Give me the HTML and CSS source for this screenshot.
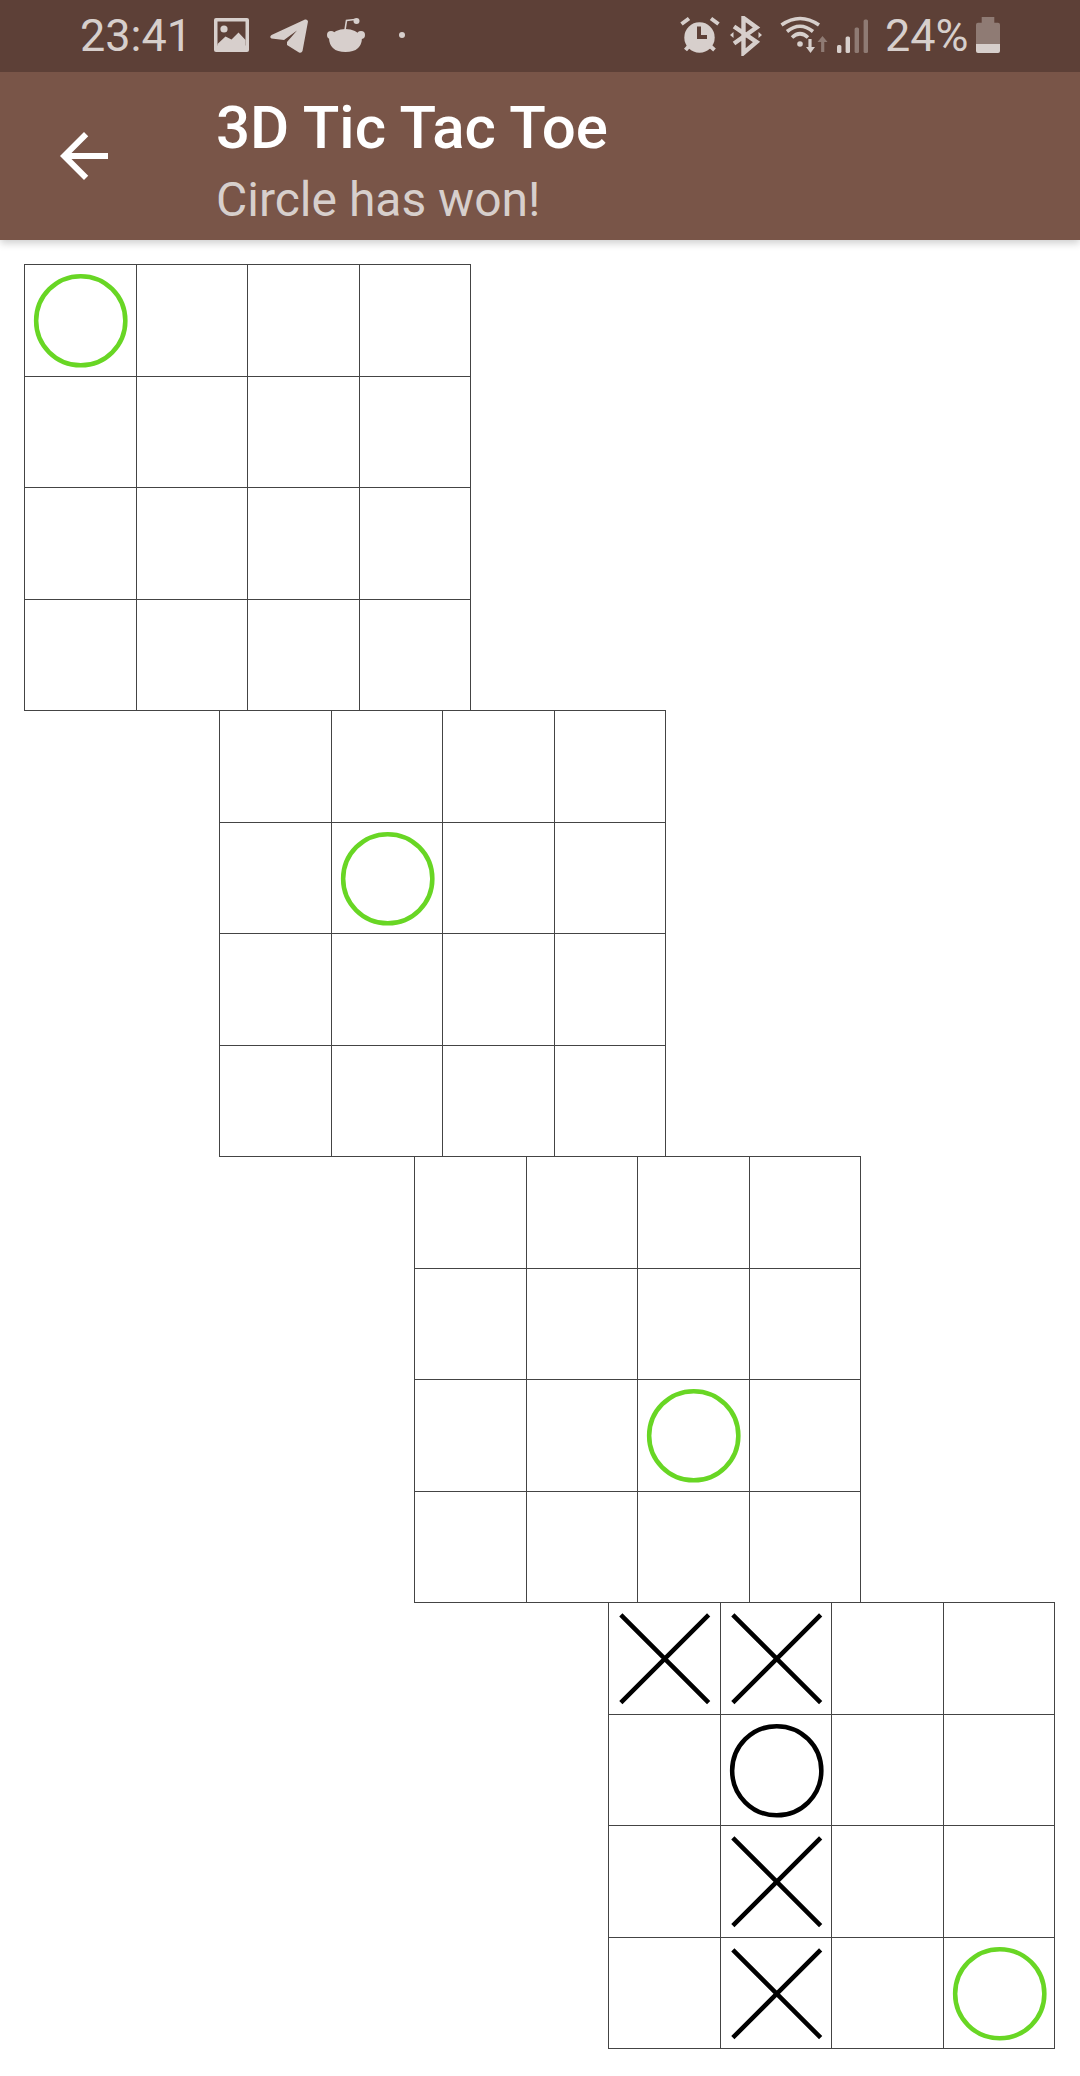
FILE: index.html
```html
<!DOCTYPE html>
<html lang="en">
<head>
  <meta charset="UTF-8">
  <meta name="viewport" content="width=device-width, initial-scale=1.0">
  <title>3D Tic Tac Toe</title>
  <link rel="stylesheet" href="styles.css">
</head>
<body>
  <svg class="defs" width="0" height="0">
    <defs>
      <g id="nought"><circle cx="56.5" cy="56.5" r="45.2"/></g>
      <g id="cross"><path d="M12 12L101 101M101 12L12 101"/></g>
    </defs>
  </svg>

  <header class="app-header">
    <div class="status-bar">
      <div class="status-left">
        <span class="status-text time">23:41</span>
        <svg class="icon icon-image" viewBox="0 0 36 40">
          <rect x="0" y="2" width="35" height="34" rx="2" fill="#d7cfcc"/>
          <rect x="3.5" y="5.5" width="28" height="24" fill="#5d4037"/>
          <circle cx="10" cy="13" r="3.6" fill="#d7cfcc"/>
          <path d="M3.5 28L11.5 20.5L17.5 23.5L24.5 16.5L31.5 24V31H3.5Z" fill="#d7cfcc"/>
        </svg>
        <svg class="icon icon-telegram" viewBox="0 0 40 40">
          <path d="M36 3.5L2.5 19Q0 21 2.5 22.5L15 24L28 14.5L18 26L18 29L30 36.5Q32.5 37.5 33.5 35L39 5.5Q38.5 3 36 3.5Z" fill="#d7cfcc"/>
        </svg>
        <svg class="icon icon-reddit" viewBox="0 0 38 40">
          <circle cx="4" cy="19" r="4" fill="#d7cfcc"/>
          <circle cx="34" cy="19" r="4" fill="#d7cfcc"/>
          <path d="M2 21Q8 13 18.5 13Q29 13 35 21Q35 36 18.5 36Q2 36 2 21Z" fill="#d7cfcc"/>
          <path d="M18 14L19.5 4.5L28 3.5" fill="none" stroke="#d7cfcc" stroke-width="1.6"/>
          <circle cx="29.5" cy="5" r="3" fill="#d7cfcc"/>
        </svg>
        <span class="status-dot"></span>
      </div>
      <div class="status-right">
        <svg class="icon icon-alarm" viewBox="0 0 40 40">
          <circle cx="19.5" cy="21.5" r="15.2" fill="#d7cfcc"/>
          <path d="M17 10.5H21V19H27V23H17Z" fill="#5d4037"/>
          <path d="M1.5 8L9 2.5M31 2.5L38.5 8M5.5 34L9 30M34.5 34L30 30" fill="none" stroke="#d7cfcc" stroke-width="4"/>
        </svg>
        <svg class="icon icon-bluetooth" viewBox="0 0 34 40">
          <path d="M5 27.5L27.5 11.5L14.5 2V37L27.5 26L5 10.5" fill="none" stroke="#d7cfcc" stroke-width="4.4"/>
          <path d="M1 19L4.5 16V22ZM33 19L29.5 16V22Z" fill="#d7cfcc"/>
        </svg>
        <svg class="icon icon-wifi" viewBox="0 0 48 40">
          <g fill="none" stroke="#d7cfcc" stroke-width="3.6">
            <path d="M1.5 9Q20 -4 39 9"/>
            <path d="M7 15.5Q20 5 33 15.5"/>
            <path d="M12 21.5Q20 14 28 21.5"/>
          </g>
          <circle cx="20" cy="28" r="2.8" fill="#d7cfcc"/>
          <path d="M30 23V32" stroke="#d7cfcc" stroke-width="3.2"/>
          <path d="M26 31H35L30.5 37Z" fill="#d7cfcc"/>
          <path d="M42.7 36V25" stroke="#8f7b74" stroke-width="3.2"/>
          <path d="M37.5 26H47.5L42.5 20Z" fill="#8f7b74"/>
        </svg>
        <svg class="icon icon-signal" viewBox="0 0 32 40">
          <rect x="0" y="29" width="4.4" height="8" rx="1.5" fill="#d7cfcc"/>
          <rect x="8.6" y="20.5" width="4.4" height="16.5" rx="1.5" fill="#d7cfcc"/>
          <rect x="17.6" y="11.5" width="4.4" height="25.5" rx="1.5" fill="#8f7b74"/>
          <rect x="26.6" y="3.5" width="4.4" height="33.5" rx="1.5" fill="#8f7b74"/>
        </svg>
        <span class="status-text battery-text">24%</span>
        <svg class="icon icon-battery" viewBox="0 0 24 40">
          <path d="M5.7 1H18.3V6.7H22Q24 6.7 24 8.7V28H0V8.7Q0 6.7 2 6.7H5.7Z" fill="#8f7b74"/>
          <path d="M0 28H24V35Q24 37 22 37H2Q0 37 0 35Z" fill="#d7cfcc"/>
        </svg>
      </div>
    </div>
    <div class="app-bar">
      <svg class="back-arrow" viewBox="0 0 24 24">
        <path d="M20 11H7.83l5.59-5.59L12 4l-8 8 8 8 1.41-1.41L7.83 13H20v-2z" fill="#fff"/>
      </svg>
      <div class="titles">
        <h1 class="title">3D Tic Tac Toe</h1>
        <p class="subtitle">Circle has won!</p>
      </div>
    </div>
  </header>

  <main class="boards">
    <div class="board board-1">
      <div class="cell"><svg class="mark win" viewBox="0 0 112 112"><use href="#nought"/></svg></div><div class="cell"></div><div class="cell"></div><div class="cell"></div>
      <div class="cell"></div><div class="cell"></div><div class="cell"></div><div class="cell"></div>
      <div class="cell"></div><div class="cell"></div><div class="cell"></div><div class="cell"></div>
      <div class="cell"></div><div class="cell"></div><div class="cell"></div><div class="cell"></div>
    </div>
    <div class="board board-2">
      <div class="cell"></div><div class="cell"></div><div class="cell"></div><div class="cell"></div>
      <div class="cell"></div><div class="cell"><svg class="mark win" viewBox="0 0 112 112"><use href="#nought"/></svg></div><div class="cell"></div><div class="cell"></div>
      <div class="cell"></div><div class="cell"></div><div class="cell"></div><div class="cell"></div>
      <div class="cell"></div><div class="cell"></div><div class="cell"></div><div class="cell"></div>
    </div>
    <div class="board board-3">
      <div class="cell"></div><div class="cell"></div><div class="cell"></div><div class="cell"></div>
      <div class="cell"></div><div class="cell"></div><div class="cell"></div><div class="cell"></div>
      <div class="cell"></div><div class="cell"></div><div class="cell"><svg class="mark win" viewBox="0 0 112 112"><use href="#nought"/></svg></div><div class="cell"></div>
      <div class="cell"></div><div class="cell"></div><div class="cell"></div><div class="cell"></div>
    </div>
    <div class="board board-4">
      <div class="cell"><svg class="mark" viewBox="0 0 112 112"><use href="#cross"/></svg></div><div class="cell"><svg class="mark" viewBox="0 0 112 112"><use href="#cross"/></svg></div><div class="cell"></div><div class="cell"></div>
      <div class="cell"></div><div class="cell"><svg class="mark" viewBox="0 0 112 112"><use href="#nought"/></svg></div><div class="cell"></div><div class="cell"></div>
      <div class="cell"></div><div class="cell"><svg class="mark" viewBox="0 0 112 112"><use href="#cross"/></svg></div><div class="cell"></div><div class="cell"></div>
      <div class="cell"></div><div class="cell"><svg class="mark" viewBox="0 0 112 112"><use href="#cross"/></svg></div><div class="cell"></div><div class="cell"><svg class="mark win" viewBox="0 0 112 112"><use href="#nought"/></svg></div>
    </div>
  </main>
</body>
</html>
```

FILE: styles.css
```css
/* Page */
body {
  margin: 0;
  background-color: #ffffff;
  font-family: Roboto, sans-serif;
  overflow: hidden;
}

.defs {
  position: absolute;
}

/* Header */
.app-header {
  position: relative;
  z-index: 1;
  box-shadow: 0 3px 8px rgba(0, 0, 0, 0.2);
}

/* Status bar */
.status-bar {
  height: 72px;
  background-color: #5d4037;
  display: flex;
  justify-content: space-between;
  align-items: center;
  padding: 0 80px;
  color: #d7cfcc;
}

.status-left,
.status-right {
  display: flex;
  align-items: center;
}

.status-text {
  font-size: 45px;
  line-height: 40px;
}

.icon {
  display: block;
  height: 40px;
  flex: none;
}

.icon-image { width: 36px; margin-left: 22px; }
.icon-telegram { width: 40px; margin-left: 19px; }
.icon-reddit { width: 38px; margin-left: 18px; }

.status-dot {
  width: 6px;
  height: 6px;
  border-radius: 50%;
  background-color: #d7cfcc;
  margin-left: 34px;
  margin-top: -2px;
}

.icon-alarm { width: 40px; }
.icon-bluetooth { width: 34px; margin-left: 9px; }
.icon-wifi { width: 48px; margin-left: 17px; }
.icon-signal { width: 32px; margin-left: 9px; }
.battery-text { margin-left: 16px; }
.icon-battery { width: 24px; margin-left: 7.5px; }

/* App bar */
.app-bar {
  height: 168px;
  background-color: #795548;
  display: flex;
  align-items: center;
  padding-left: 48px;
}

.back-arrow {
  width: 72px;
  height: 72px;
  flex: none;
}

.titles {
  margin-left: 96px;
  padding-top: 8px;
}

.title {
  margin: 0;
  font-size: 60px;
  line-height: 72px;
  font-weight: 500;
  color: #ffffff;
}

.subtitle {
  margin: 8px 0 0;
  font-size: 48px;
  line-height: 56px;
  color: #d7cfcc;
}

/* Boards */
.boards {
  padding: 24px 0 0 24px;
}

.board {
  display: grid;
  grid-template-columns: repeat(4, 111.5px);
  grid-auto-rows: 111.5px;
  width: 447px;
  box-sizing: border-box;
  border-top: 1px solid #444444;
  border-left: 1px solid #444444;
  margin-top: -1px;
}

.board-1 { margin-top: 0; }
.board-2 { margin-left: 195px; }
.board-3 { margin-left: 390px; }
.board-4 { margin-left: 584px; }

.cell {
  box-sizing: border-box;
  border-right: 1px solid #444444;
  border-bottom: 1px solid #444444;
}

/* Marks */
.mark {
  display: block;
  width: 100%;
  height: 100%;
  fill: none;
  stroke: #000000;
  stroke-width: 4.6;
}

.mark.win {
  stroke: #68d624;
}
```
